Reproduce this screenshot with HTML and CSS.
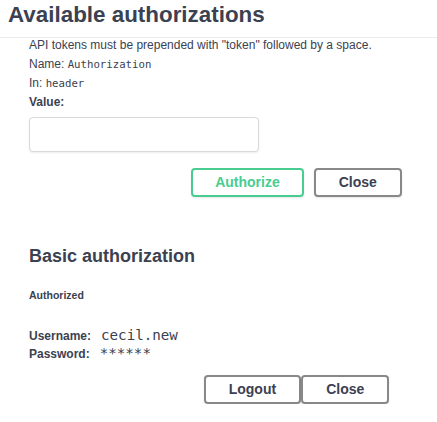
FILE: index.html
```html
<!DOCTYPE html>
<html lang="en">
<head>
<meta charset="utf-8">
<title>Available authorizations</title>
<link rel="stylesheet" href="styles.css">
</head>
<body>
<div class="modal">
  <div class="modal-header">
    <h3 class="modal-title">Available authorizations</h3>
  </div>
  <div class="modal-body">
    <div class="auth-section">
      <p class="line">API tokens must be prepended with "token" followed by a space.</p>
      <p class="line">Name: <code class="code-sm">Authorization</code></p>
      <p class="line">In: <code class="code-sm">header</code></p>
      <label class="line label">Value:</label>
      <input class="value-input" type="text">
      <div class="btn-row">
        <button class="btn btn-authorize">Authorize</button>
        <button class="btn">Close</button>
      </div>
    </div>
    <div class="auth-section section-basic">
      <h4 class="section-title">Basic authorization</h4>
      <h6 class="status">Authorized</h6>
      <div class="cred"><span class="label">Username:</span><code class="code-lg">cecil.new</code></div>
      <div class="cred"><span class="label">Password:</span><code class="code-lg">******</code></div>
      <div class="btn-row btn-row-tight">
        <button class="btn">Logout</button>
        <button class="btn">Close</button>
      </div>
    </div>
  </div>
</div>
</body>
</html>
```
FILE: styles.css
```css
html, body {
  margin: 0;
  padding: 0;
  background: #ffffff;
}

body {
  font-family: "Liberation Sans", Arial, sans-serif;
  color: #3b4151;
}

.modal {
  width: 100%;
}

.modal-header {
  padding: 2px 8px 10px;
  border-bottom: 1px solid #ebebeb;
}

.modal-title {
  margin: 0;
  font-size: 22.4px;
  line-height: 25px;
  font-weight: bold;
}

.modal-body {
  padding: 0 0 0 29px;
}

.auth-section {
  display: flex;
  flex-direction: column;
  align-items: flex-start;
}

.line {
  margin: 0 0 5px;
  font-size: 12px;
  line-height: 14px;
}

.label {
  font-weight: bold;
  font-size: 12px;
}

.code-sm {
  font-family: "DejaVu Sans Mono", monospace;
  font-size: 10.7px;
  line-height: 1;
}

.value-input {
  box-sizing: border-box;
  width: 230px;
  height: 35px;
  margin: 3px 0 0;
  border: 1px solid #d9d9d9;
  border-radius: 4px;
  box-shadow: 0 1px 2px rgba(0, 0, 0, 0.08);
  background: #fff;
}

.btn-row {
  align-self: stretch;
  display: flex;
  justify-content: center;
  gap: 10px;
  margin-top: 16px;
  padding-left: 127px;
}

.btn-row-tight {
  gap: 0;
  margin-top: 13px;
}

.btn {
  box-sizing: border-box;
  height: 29px;
  padding: 0 23px;
  font-family: "Liberation Sans", Arial, sans-serif;
  font-size: 14px;
  font-weight: bold;
  line-height: 25px;
  color: #3b4151;
  background: transparent;
  border: 2px solid #888888;
  border-radius: 4px;
  box-shadow: 0 1px 2px rgba(0, 0, 0, 0.1);
}

.btn-authorize {
  color: #49cc90;
  border-color: #49cc90;
  padding: 0 22px;
}

.section-basic {
  margin-top: 49px;
}

.section-title {
  margin: 0;
  font-size: 18px;
  line-height: 20px;
  font-weight: bold;
}

.status {
  margin: 23px 0 25px;
  font-size: 10.5px;
  line-height: 12px;
  font-weight: bold;
}

.cred {
  display: flex;
  align-items: baseline;
  gap: 10px;
  height: 18px;
  line-height: 18px;
}

.code-lg {
  font-family: "DejaVu Sans Mono", monospace;
  font-size: 14.2px;
  font-weight: normal;
}
```
